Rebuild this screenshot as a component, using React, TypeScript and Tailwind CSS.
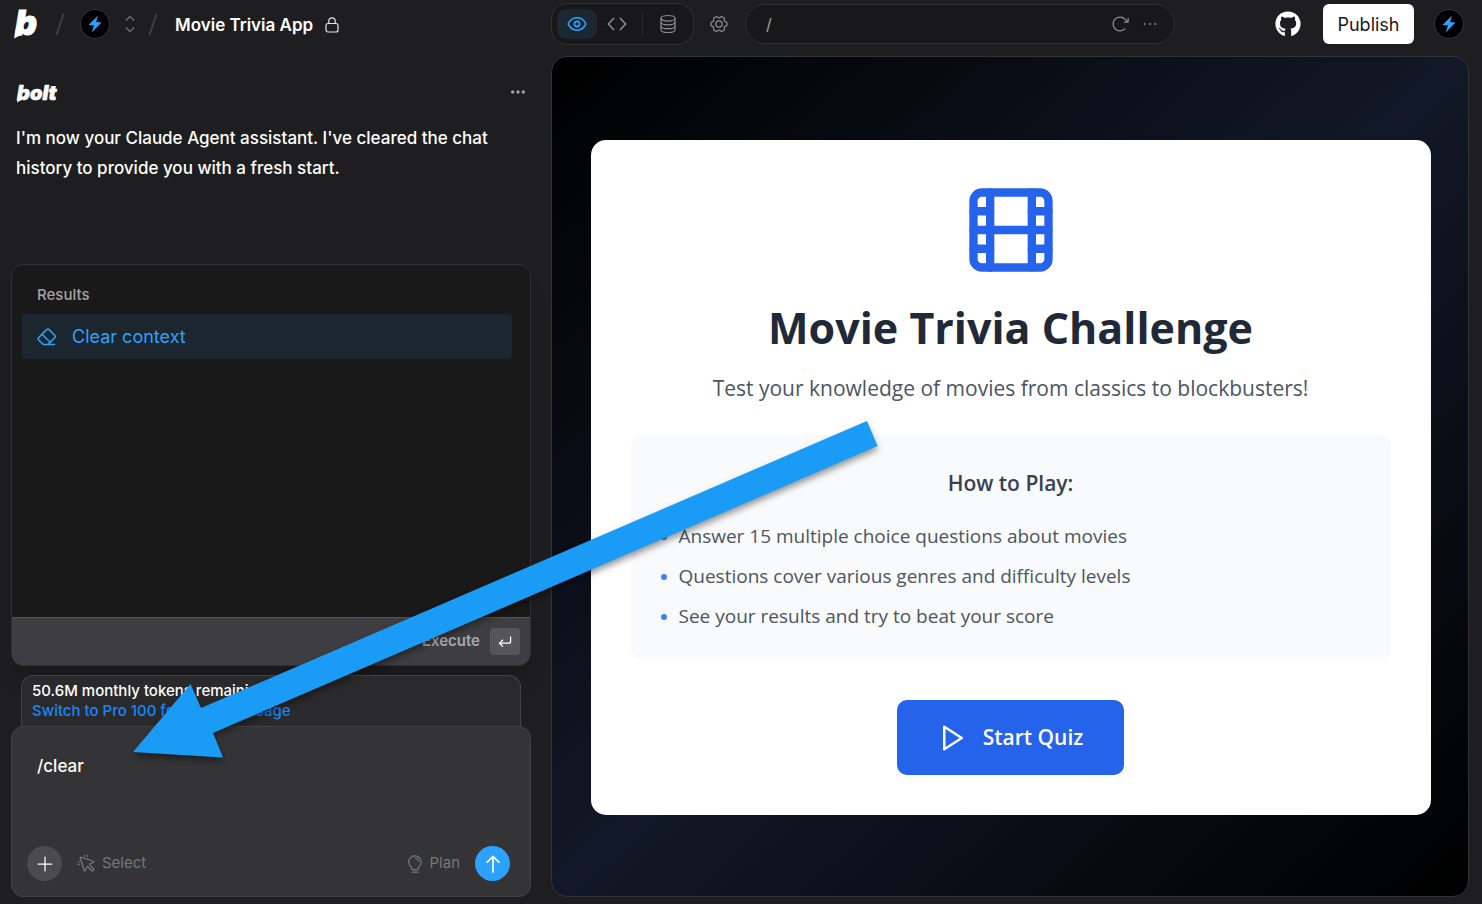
import { useState } from "react";
import { Film } from "lucide-react";
import {
  PiArrowClockwise,
  PiCaretUpDown,
  PiCursorClick,
  PiDotsThree,
  PiGearSix,
  PiLightbulb,
  PiPlus,
} from "react-icons/pi";
import { FaGithub } from "react-icons/fa";

const rules = [
  "Answer 15 multiple choice questions about movies",
  "Questions cover various genres and difficulty levels",
  "See your results and try to beat your score",
];

const BoltMark = () => (
  <svg width="32" height="46" viewBox="0 0 32 46" fill="#fff" role="img" aria-label="Bolt">
    <text
      x="3"
      y="34"
      fontFamily="Inter, sans-serif"
      fontSize="34"
      fontWeight="900"
      fontStyle="italic"
      stroke="#fff"
      strokeWidth="1"
    >
      b
    </text>
    <path d="M4 27 L2 37.5 L11 33 Z" />
  </svg>
);

const BoltWordmark = () => (
  <svg width="50" height="32" viewBox="0 0 50 32" fill="#fff" role="img" aria-label="bolt">
    <text
      x="1"
      y="24"
      fontFamily="Inter, sans-serif"
      fontSize="20"
      fontWeight="900"
      fontStyle="italic"
      stroke="#fff"
      strokeWidth="0.6"
    >
      bolt
    </text>
    <path d="M2 20 L1 26.5 L7 23 Z" />
  </svg>
);

const Avatar = () => (
  <span className="flex size-7 shrink-0 items-center justify-center rounded-full bg-black ring-1 ring-[#333336]">
    <svg width="14" height="18" viewBox="0 0 14 18">
      <path d="M10 0.5 L0.5 10 L6 10.6 L3.6 17.5 L13.5 7.4 L8 6.9 Z" fill="#2ba2ff" />
    </svg>
  </span>
);

const Slash = () => (
  <svg width="10" height="24" viewBox="0 0 10 24" className="shrink-0">
    <path d="M8.5 2 L1.5 23" stroke="#3f3f43" strokeWidth="2" />
  </svg>
);

const LockIcon = () => (
  <svg width="14" height="16" viewBox="0 0 14 16" fill="none" stroke="#e4e4e7" strokeWidth="1.2">
    <rect x="1" y="6.5" width="12" height="8.5" rx="2" />
    <path d="M3.8 6.5V4a3.2 3.2 0 0 1 6.4 0v2.5" />
  </svg>
);

const EyeIcon = () => (
  <svg width="20" height="16" viewBox="0 0 20 16" fill="none" stroke="currentColor" strokeWidth="1.6">
    <path d="M1.4 8.7a1.4 1.4 0 0 1 0-1.4C3.2 4 6.3 1.8 10 1.8S16.8 4 18.6 7.3a1.4 1.4 0 0 1 0 1.4C16.8 12 13.7 14.2 10 14.2S3.2 12 1.4 8.7Z" />
    <circle cx="10" cy="8" r="2.6" />
  </svg>
);

const CodeIcon = () => (
  <svg width="20" height="14" viewBox="0 0 20 14" fill="none" stroke="currentColor" strokeWidth="1.6">
    <path d="M7 1 1.4 7 7 13M13 1l5.6 6L13 13" />
  </svg>
);

const DatabaseIcon = () => (
  <svg width="18" height="20" viewBox="0 0 18 20" fill="none" stroke="currentColor" strokeWidth="1.2">
    <ellipse cx="9" cy="4.3" rx="7" ry="2.8" />
    <path d="M2 4.3v11.4c0 1.6 3.1 2.8 7 2.8s7-1.2 7-2.8V4.3" />
    <path d="M2 8.1c0 1.6 3.1 2.8 7 2.8s7-1.2 7-2.8" />
    <path d="M2 11.9c0 1.6 3.1 2.8 7 2.8s7-1.2 7-2.8" />
  </svg>
);

const EraserIcon = () => (
  <svg
    width="20"
    height="18"
    viewBox="0 0 20 18"
    fill="none"
    stroke="currentColor"
    strokeWidth="1.6"
    strokeLinecap="round"
    strokeLinejoin="round"
  >
    <path d="M17.5 16.5H6.3L1.7 12a1.8 1.8 0 0 1 0-2.5L9.6 1.6a1.8 1.8 0 0 1 2.5 0l5.6 5.6a1.8 1.8 0 0 1 0 2.5l-6.8 6.8" />
    <path d="M5 6.2 13.2 14.2" />
  </svg>
);

const ReturnIcon = () => (
  <svg width="14" height="14" viewBox="0 0 14 14" fill="none" stroke="#fff" strokeWidth="1.3">
    <path d="M12.6 1.5v4.7a2 2 0 0 1-2 2H2" />
    <path d="M5 4.8 1.6 8.2 5 11.6" />
  </svg>
);

const DotsIcon = () => (
  <svg width="16" height="6" viewBox="0 0 16 6" fill="currentColor">
    <circle cx="2.7" cy="3" r="1.7" />
    <circle cx="8" cy="3" r="1.7" />
    <circle cx="13.3" cy="3" r="1.7" />
  </svg>
);

const SendIcon = () => (
  <svg width="14" height="18" viewBox="0 0 14 18" fill="none" stroke="currentColor" strokeWidth="1.7">
    <path d="M7 17V1.6M1.2 7.2 7 1.4l5.8 5.8" strokeLinecap="round" strokeLinejoin="round" />
  </svg>
);

const PlayIcon = () => (
  <svg width="30" height="30" viewBox="0 0 24 24" fill="none" stroke="currentColor" strokeWidth="2">
    <polygon points="5 3 19 12 5 21" strokeLinejoin="round" />
  </svg>
);

const Header = () => {
  const [url, setUrl] = useState("/");

  return (
    <header className="flex h-12 items-center">
      <div className="flex w-[551px] shrink-0 items-center pl-3">
        <a href="#" aria-label="Home">
          <BoltMark />
        </a>
        <span className="ml-[11px]">
          <Slash />
        </span>
        <span className="ml-4">
          <Avatar />
        </span>
        <button aria-label="Switch workspace" className="ml-[11px] text-[#6e6e73]">
          <PiCaretUpDown size={20} />
        </button>
        <span className="ml-2">
          <Slash />
        </span>
        <div className="ml-[17px] flex items-center gap-3 pt-0.5">
          <h1 className="text-[17px] leading-6 font-semibold text-white">Movie Trivia App</h1>
          <LockIcon />
        </div>
      </div>

      <div className="flex min-w-0 flex-1 items-center pr-[19px] text-[#8b8b90]">
        <div className="flex h-[42px] w-[143px] shrink-0 items-center rounded-2xl border border-[#303033] bg-[#18181a] pl-[5px]">
          <button
            aria-label="Preview"
            className="flex h-[30px] w-10 items-center justify-center rounded-[9px] bg-[#1b2831] text-[#2ba2ff]"
          >
            <EyeIcon />
          </button>
          <button aria-label="Code" className="flex h-[30px] w-10 items-center justify-center">
            <CodeIcon />
          </button>
          <span className="ml-[5px] h-6 w-px bg-[#2c2c2f]"></span>
          <button aria-label="Database" className="ml-4 flex items-center justify-center">
            <DatabaseIcon />
          </button>
        </div>
        <button aria-label="Settings" className="ml-[15px] shrink-0">
          <PiGearSix size={20} />
        </button>
        <div className="ml-4 flex h-10 max-w-[430px] min-w-0 flex-1 items-center rounded-full border border-[#303033] bg-[#18181a] pr-[14px] pl-5">
          <input
            aria-label="Path"
            value={url}
            onChange={(e) => setUrl(e.target.value)}
            className="min-w-0 flex-1 bg-transparent text-base text-[#a1a1a6] outline-none"
          />
          <button aria-label="Reload">
            <PiArrowClockwise size={20} />
          </button>
          <button aria-label="More" className="ml-2.5">
            <PiDotsThree size={20} />
          </button>
        </div>
        <div className="ml-auto flex shrink-0 items-center pl-4">
          <a href="#" aria-label="GitHub" className="text-white">
            <FaGithub size={26} />
          </a>
          <button className="ml-[22px] h-10 w-[91px] rounded-md bg-white text-[18px] text-[#18181b]">Publish</button>
          <button aria-label="Account" className="ml-[21px]">
            <Avatar />
          </button>
        </div>
      </div>
    </header>
  );
};

const CommandMenu = () => (
  <section className="flex h-[402px] flex-col overflow-hidden rounded-xl border border-[#313134] bg-[#191919] shadow-xl">
    <div className="flex-1 px-2.5 pt-5">
      <h2 className="px-[15px] text-[15px] leading-5 font-medium text-[#a3a3a3]">Results</h2>
      <button className="mt-[9px] mr-2 flex h-[45px] w-[490px] max-w-full items-center rounded bg-[#1b262e] px-[15px] text-[18px] text-[#2ba2ff]">
        <EraserIcon />
        <span className="ml-[15px]">Clear context</span>
      </button>
    </div>
    <div className="flex h-12 items-center justify-end border-t border-[#545458] bg-[#3e3e42] pr-2.5">
      <span className="text-[15px] font-semibold text-[#a8a8ad]">Execute</span>
      <button aria-label="Execute" className="ml-2.5 flex h-[27px] w-[30px] items-center justify-center rounded bg-[#55555a]">
        <ReturnIcon />
      </button>
    </div>
  </section>
);

const Composer = () => {
  const [prompt, setPrompt] = useState("/clear");

  return (
    <form
      onSubmit={(e) => e.preventDefault()}
      className="flex h-[171px] flex-col rounded-xl border border-[#424245] bg-[#343436] px-[15px] pt-[27px] pb-[15px]"
    >
      <textarea
        aria-label="Prompt"
        value={prompt}
        onChange={(e) => setPrompt(e.target.value)}
        className="flex-1 resize-none bg-transparent px-2.5 text-[17px] leading-6 font-medium text-white outline-none"
      />
      <div className="flex items-center text-[15px] text-[#76767c]">
        <button
          aria-label="Add attachment"
          className="flex size-[35px] items-center justify-center rounded-full bg-[#4b4b4e] text-white"
        >
          <PiPlus size={20} />
        </button>
        <button className="ml-[15px] flex items-center gap-[5px]">
          <PiCursorClick size={20} />
          Select
        </button>
        <button className="ml-auto flex items-center gap-[5px]">
          <PiLightbulb size={20} />
          Plan
        </button>
        <button
          aria-label="Send"
          className="mr-[5px] ml-[15px] flex size-[35px] items-center justify-center rounded-full bg-[#2ba2ff] text-white"
        >
          <SendIcon />
        </button>
      </div>
    </form>
  );
};

const ChatPanel = () => (
  <aside className="flex w-[551px] shrink-0 flex-col pr-5 pl-[11px]">
    <div className="flex items-center justify-between pt-5 pr-[5px] pl-[5px]">
      <BoltWordmark />
      <button aria-label="Message options" className="text-[#a1a1a6]">
        <DotsIcon />
      </button>
    </div>
    <p className="mt-[15px] pr-5 pl-[5px] text-[17px] leading-[30px] font-medium text-white">
      I'm now your Claude Agent assistant. I've cleared the chat history to provide you with a fresh start.
    </p>

    <div className="mt-auto pt-5">
      <CommandMenu />
      <div className="mx-2.5 mt-[9px] h-[51px] rounded-t-xl border border-b-0 border-[#424245] bg-[#2a2a2c] px-2.5 pt-[5px] text-[15px] leading-5 font-medium">
        <p className="text-white">50.6M monthly tokens remaining.</p>
        <a href="#" className="text-[#1488fc]">
          Switch to Pro 100 for 2x more usage
        </a>
      </div>
      <Composer />
    </div>
  </aside>
);

const Preview = () => (
  <main className="flex min-w-0 flex-1 items-center justify-center rounded-2xl border border-[#333336] bg-linear-to-br/srgb from-black via-[#111827] to-black pt-0.5 pr-5 pl-[21px] font-['Open_Sans',sans-serif]">
    <div className="flex w-full max-w-[840px] flex-col items-center rounded-[15px] bg-white p-10">
      <Film size={100} className="text-[#2563eb]" />
      <h2 className="mt-5 text-[43px] leading-14 font-bold text-[#1f2937]">Movie Trivia Challenge</h2>
      <p className="mt-4 mb-[31px] text-[21px] leading-8 text-[#4b5563]">
        Test your knowledge of movies from classics to blockbusters!
      </p>
      <div className="w-full rounded-[10px] bg-[#f9fafb] px-[30px] pt-7 pb-[23px]">
        <h3 className="text-center text-[21px] leading-10 font-semibold text-[#374151]">How to Play:</h3>
        <ul className="mt-[13px] text-[19px] leading-10 text-[#4b5563]">
          {rules.map((rule) => (
            <li key={rule} className="flex items-center">
              <span className="mt-0.5 mr-3 size-1.5 rounded-full bg-[#3b82f6]"></span>
              {rule}
            </li>
          ))}
        </ul>
      </div>
      <button className="mt-[41px] flex h-[75px] w-[227px] items-center justify-center gap-[15px] rounded-[10px] bg-[#2563eb] text-[21px] font-semibold text-white">
        <PlayIcon />
        Start Quiz
      </button>
    </div>
  </main>
);

// Pointer drawn over the whole window, from the preview down to the prompt box
const Pointer = () => (
  <svg
    width="900"
    height="780"
    viewBox="0 0 900 780"
    className="pointer-events-none absolute top-0 left-0 drop-shadow-[0_4px_3px_rgba(0,0,0,0.4)]"
  >
    <path d="M867 421 L877.5 446 L213 733 L223 757.5 L133 752 L190.5 684 L201 708 Z" fill="#1a9bf5" />
  </svg>
);

const App = () => {
  return (
    <div className="relative flex min-h-screen flex-col bg-[#1e1e20] font-['Inter',sans-serif]">
      <Header />
      <div className="flex flex-1 pt-2 pr-[13px] pb-[7px]">
        <ChatPanel />
        <Preview />
      </div>
      <Pointer />
    </div>
  );
};

export default App;
